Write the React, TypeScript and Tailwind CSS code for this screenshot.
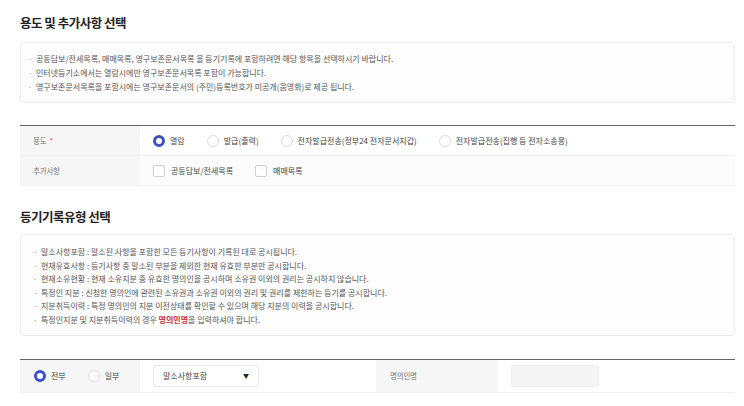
import { ReactNode } from "react";

const font = { fontFamily: '"Noto Sans CJK KR", "Noto Sans", sans-serif' };

function Radio({ checked, label }: { checked?: boolean; label: string }) {
  return (
    <label className="flex items-center gap-[5px]">
      {checked ? (
        <span className="h-[12px] w-[12px] rounded-full border-[3.5px] border-[#3d4fc4] bg-white" />
      ) : (
        <span className="h-[12px] w-[12px] rounded-full border border-[#dcdcdc] bg-white" />
      )}
      <span className="text-[8px] text-[#444]">{label}</span>
    </label>
  );
}

function Checkbox({ label }: { label: string }) {
  return (
    <label className="flex items-center gap-[6px]">
      <span className="h-[12px] w-[12px] rounded-[2px] border border-[#cfcfcf] bg-white" />
      <span className="text-[8px] text-[#444]">{label}</span>
    </label>
  );
}

function Notice({ lines, className }: { lines: ReactNode[]; className: string }) {
  return (
    <div className={`rounded-[4px] border border-[#ececec] bg-[#fdfdfd] ${className}`}>
      {lines.map((line, i) => (
        <div key={i} className="flex text-[8px] text-[#555]">
          <span className="w-[8px] shrink-0 text-[#999]">·</span>
          <span>{line}</span>
        </div>
      ))}
    </div>
  );
}

function Label({ children }: { children: ReactNode }) {
  return (
    <div className="flex w-[120px] shrink-0 items-center bg-[#f6f6f6] pl-[13px] text-[7.5px] tracking-[-0.2px] text-[#777]">
      {children}
    </div>
  );
}

export default function App() {
  return (
    <div className="min-h-screen bg-white pl-[20px] pr-[9px] pt-[13px]" style={font}>
      <h1 className="h-[20px] text-[12.5px] font-bold leading-[20px] tracking-[-0.5px] text-[#222]">
        용도 및 추가사항 선택
      </h1>

      <Notice
        className="mt-[9px] pb-[8px] pl-[7px] pt-[9px] leading-[14px]"
        lines={[
          "공동담보/전세목록, 매매목록, 영구보존문서목록 을 등기기록에 포함하려면 해당 항목을 선택하시기 바랍니다.",
          "인터넷등기소에서는 열람시에만 영구보존문서목록 포함이 가능합니다.",
          "영구보존문서목록을 포함시에는 영구보존문서의 (주민)등록번호가 미공개(음영화)로 제공 됩니다.",
        ]}
      />

      <div className="mt-[22px] border-t border-[#666]">
        <div className="flex h-[30px] border-b border-[#f0f0f0]">
          <Label>
            용도 <span className="ml-[3px] text-[#e53935]">*</span>
          </Label>
          <div className="flex items-center gap-[22px] pl-[13px]">
            <Radio checked label="열람" />
            <Radio label="발급(출력)" />
            <Radio label="전자발급전송(정부24 전자문서지갑)" />
            <Radio label="전자발급전송(집행 등 전자소송용)" />
          </div>
        </div>
        <div className="flex h-[30px] border-b border-[#f3f3f3] bg-[#fcfcfc]">
          <Label>추가사항</Label>
          <div className="flex items-center gap-[22px] pl-[13px]">
            <Checkbox label="공동담보/전세목록" />
            <Checkbox label="매매목록" />
          </div>
        </div>
      </div>

      <h2 className="mt-[21px] h-[20px] text-[12.5px] font-bold leading-[20px] tracking-[-0.5px] text-[#222]">
        등기기록유형 선택
      </h2>

      <Notice
        className="mt-[7px] pb-[8px] pl-[12px] pt-[10px] leading-[13.6px]"
        lines={[
          "말소사항포함 : 말소된 사항을 포함한 모든 등기사항이 기록된 대로 공시됩니다.",
          "현재유효사항 : 등기사항 중 말소된 부분을 제외한 현재 유효한 부분만 공시합니다.",
          "현재소유현황 : 현재 소유지분 중 유효한 명의인을 공시하며 소유권 이외의 권리는 공시하지 않습니다.",
          "특정인 지분 : 신청한 명의인에 관련된 소유권과 소유권 이외의 권리 및 권리를 제한하는 등기를 공시합니다.",
          "지분취득이력 : 특정 명의인의 지분 이전상태를 확인할 수 있으며 해당 지분의 이력을 공시합니다.",
          <>
            특정인지분 및 지분취득이력의 경우 <b className="font-bold text-[#d32f2f]">명의인명</b>을 입력하셔야 합니다.
          </>,
        ]}
      />

      <div className="mt-[23px] border-t border-[#666]">
        <div className="flex h-[33px] border-b border-[#f0f0f0]">
          <div className="flex w-[120px] shrink-0 items-center gap-[22px] bg-[#f6f6f6] pl-[14px]">
            <Radio checked label="전부" />
            <Radio label="일부" />
          </div>
          <div className="flex w-[236px] shrink-0 items-center pl-[13px]">
            <div className="flex h-[22px] w-[106px] items-center justify-between rounded-[3px] border border-[#e6e6e6] bg-white pl-[9px] pr-[9px]">
              <span className="text-[8px] text-[#444]">말소사항포함</span>
              <span className="text-[6px] text-[#222]">▼</span>
            </div>
          </div>
          <div className="flex w-[122px] shrink-0 items-center bg-[#f6f6f6] pl-[14px] text-[7.5px] tracking-[-0.2px] text-[#777]">
            명의인명
          </div>
          <div className="flex items-center pl-[13px]">
            <div className="h-[22px] w-[88px] rounded-[3px] border border-[#eeeeee] bg-[#f5f5f5]" />
          </div>
        </div>
      </div>
    </div>
  );
}
